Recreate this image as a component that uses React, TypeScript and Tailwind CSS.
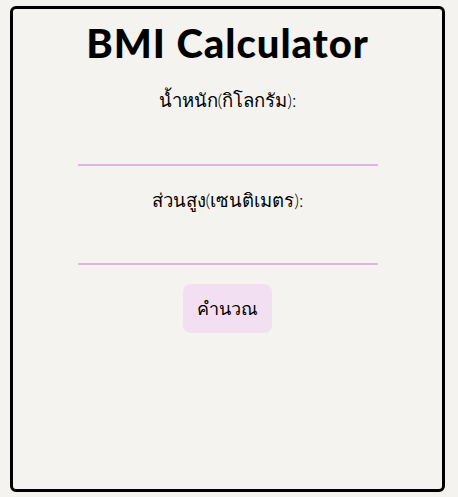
import React, { useState } from "react";

const App = () => {
  const [weight, setWeight] = useState("");
  const [height, setHeight] = useState("");

  return (
    <div className="min-h-screen bg-[#f4f3ef] pt-[6px] px-[10px] font-['Lato','Noto_Sans',sans-serif] text-black">
      <div className="h-[486px] w-[435px] border-[3px] border-black rounded-md flex flex-col items-center">
        <h1 className="mt-[10px] text-[40px] leading-[48px] font-black tracking-[1px]">
          BMI Calculator
        </h1>
        <label className="mt-[21px] text-[18.5px] leading-[24px] font-light">น้ำหนัก(กิโลกรัม):</label>
        <input
          value={weight}
          onChange={(e) => setWeight(e.target.value)}
          className="mt-[34px] w-[300px] h-[20px] bg-transparent border-b-2 border-[#e0b4e0] outline-none"
        />
        <label className="mt-[22px] text-[18.5px] leading-[24px] font-light">ส่วนสูง(เซนติเมตร):</label>
        <input
          value={height}
          onChange={(e) => setHeight(e.target.value)}
          className="mt-[33px] w-[300px] h-[20px] bg-transparent border-b-2 border-[#e0b4e0] outline-none"
        />
        <button className="mt-[19px] w-[89px] h-[49px] rounded-lg bg-[#f2dff2] text-[18px]">
          คำนวณ
        </button>
      </div>
    </div>
  );
};

export default App;
